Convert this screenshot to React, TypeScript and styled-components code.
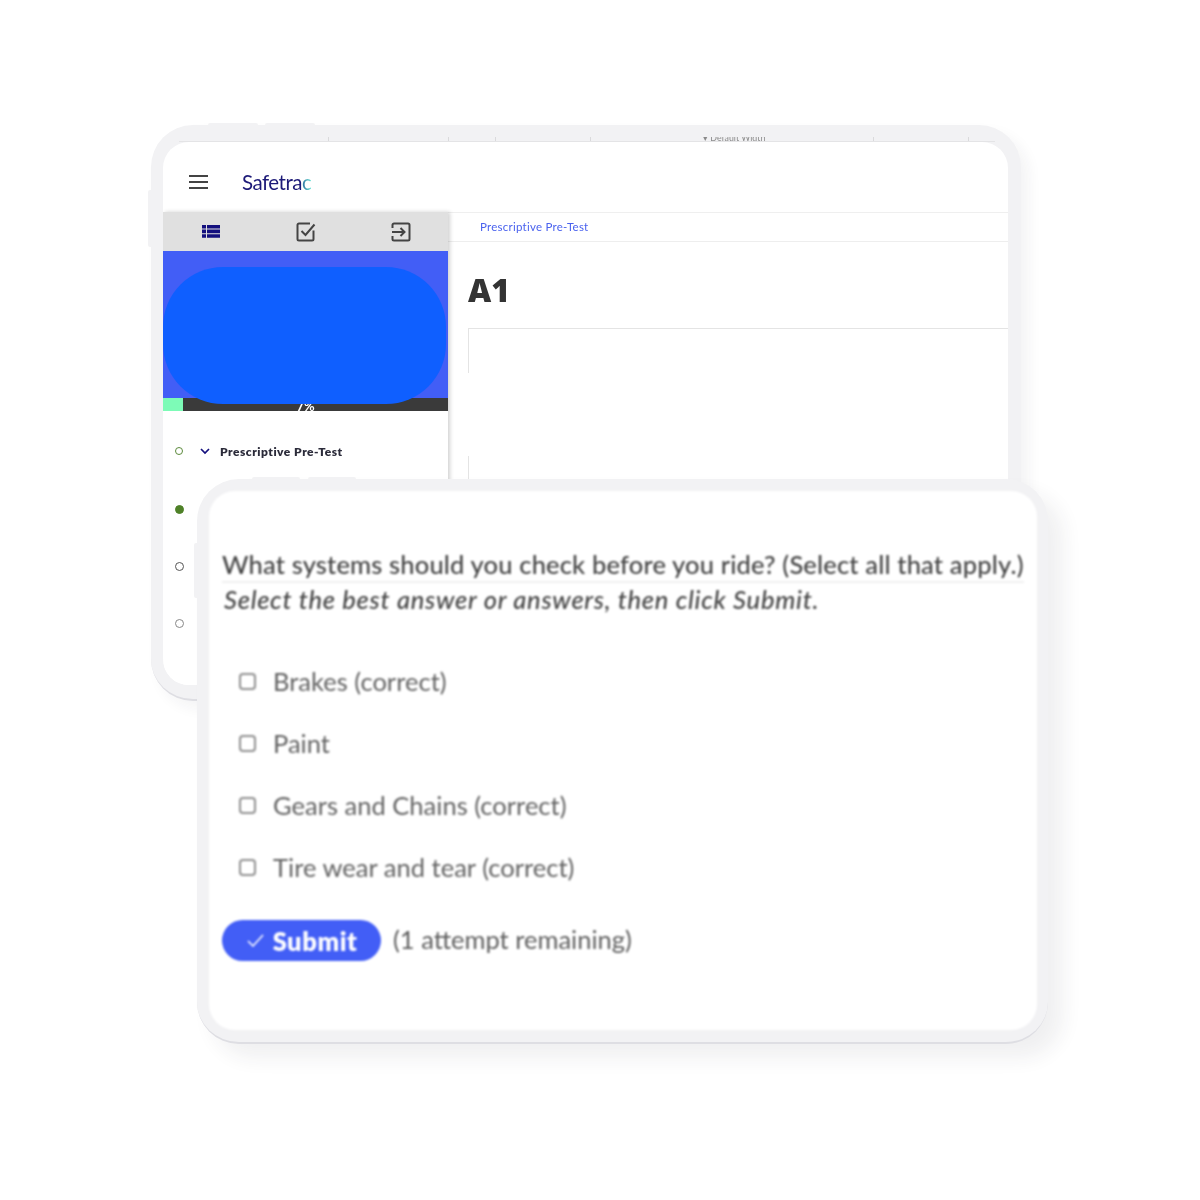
import React from "react";
import styled, { createGlobalStyle } from "styled-components";

const Global = createGlobalStyle`
  html, body { margin: 0; padding: 0; background: #fff; }
  body { font-family: "Lato", "Open Sans", sans-serif; }
`;

const Canvas = styled.div`
  position: relative;
  width: 1200px;
  height: 1200px;
  overflow: hidden;
  background: #fff;
`;

const Device = styled.div<{ $front?: boolean }>`
  position: absolute;
  box-sizing: border-box;
  background: #f2f2f4;
  left: ${(p) => (p.$front ? "197px" : "151px")};
  top: ${(p) => (p.$front ? "479px" : "125px")};
  width: ${(p) => (p.$front ? "851px" : "870px")};
  height: ${(p) => (p.$front ? "565px" : "576px")};
  border-radius: 42px;
  padding: ${(p) => (p.$front ? "12px 11px 12px 12px" : "17px 13px 14px 12px")};
  border-bottom: 2px solid #dedee3;
  box-shadow: ${(p) =>
    p.$front ? "15px 14px 20px rgba(40, 40, 60, 0.07)" : "8px 8px 14px rgba(40, 40, 60, 0.05)"};
`;

const SideKey = styled.span<{ $x: number; $w: number }>`
  position: absolute;
  top: -2px;
  left: ${(p) => p.$x}px;
  width: ${(p) => p.$w}px;
  height: 2px;
  background: #f2f2f4;
  border-radius: 2px 2px 0 0;
`;

const VolumeKey = styled.span<{ $top: number; $h: number }>`
  position: absolute;
  left: -3px;
  top: ${(p) => p.$top}px;
  width: 3px;
  height: ${(p) => p.$h}px;
  background: #f2f2f4;
  border-radius: 2px 0 0 2px;
`;

const Ruler = styled.div`
  position: absolute;
  top: 12px;
  left: 28px;
  right: 26px;
  height: 5px;
  box-sizing: border-box;
  overflow: hidden;
  border-bottom: 1px solid #e4e4e6;
`;

const Tick = styled.span<{ $x: number }>`
  position: absolute;
  left: ${(p) => p.$x}px;
  top: 0;
  width: 1px;
  height: 4px;
  background: #dadadc;
`;

const RulerLabel = styled.span`
  position: absolute;
  left: 524px;
  top: -4px;
  font-size: 8.800px;
  line-height: 10px;
  color: #8a8a8a;
  white-space: nowrap;
  filter: blur(0.4px);
`;

const Screen = styled.div<{ $front?: boolean }>`
  position: relative;
  height: 100%;
  background: #fff;
  overflow: hidden;
  border-radius: 26px;
  filter: blur(${(p) => (p.$front ? "0.85px" : "0.6px")});
`;

const TopBar = styled.header`
  height: 70px;
  display: flex;
  align-items: center;
  padding: 10px 0 0 26px;
  gap: 34px;
  box-sizing: border-box;
`;

const Logo = styled.span`
  font-size: 20.500px;
  font-weight: 400;
  letter-spacing: -0.5px;
  color: #1d1a78;
`;

const LogoEnd = styled.span`
  background: linear-gradient(90deg, #2c6f9f, #6fe3d6);
  -webkit-background-clip: text;
  background-clip: text;
  color: transparent;
`;

const Body = styled.div`
  display: flex;
  height: 500px;
`;

const Sidebar = styled.aside`
  flex: 0 0 285px;
  box-shadow: 2px 0 4px rgba(0, 0, 0, 0.18);
  background: #fff;
  position: relative;
  z-index: 1;
`;

const Tabs = styled.div`
  height: 39px;
  background: #e0e0e0;
  display: grid;
  grid-template-columns: 95px 95px 95px;
  justify-items: center;
  align-items: center;
`;

const Hero = styled.div`
  height: 147px;
  background: #425ef6;
  box-sizing: border-box;
  position: relative;
`;

const Blob = styled.div`
  position: absolute;
  top: 16px;
  left: 0;
  width: 283px;
  height: 137px;
  background: #0f5fff;
  border-radius: 60px;
  z-index: 2;
`;

const Progress = styled.div`
  height: 13px;
  background: #3a3a3a;
  position: relative;
  overflow: hidden;
  text-align: center;
  color: #fff;
  font-size: 13px;
  font-weight: 700;
  line-height: 13px;
`;

const ProgressFill = styled.div`
  position: absolute;
  left: 0;
  top: 0;
  bottom: 0;
  background: #7dfbb7;
`;

const ProgressText = styled.span`
  position: relative;
  top: 2px;
`;

const Steps = styled.ul`
  list-style: none;
  margin: 10px 0 0;
  padding: 0;
`;

const Step = styled.li<{ $h: number }>`
  height: ${(p) => p.$h}px;
  display: flex;
  align-items: center;
  padding-left: 12px;
  box-sizing: border-box;
`;

const Dot = styled.span<{ $color: string; $filled?: boolean; $size?: number }>`
  flex: none;
  box-sizing: border-box;
  width: ${(p) => p.$size ?? 9}px;
  height: ${(p) => p.$size ?? 9}px;
  border-radius: 50%;
  border: 1.500px solid ${(p) => p.$color};
  background: ${(p) => (p.$filled ? p.$color : "transparent")};
`;

const StepLabel = styled.span`
  margin-left: 17px;
  display: inline-flex;
  align-items: center;
  gap: 10px;
  font-size: 12px;
  font-weight: 800;
  letter-spacing: 0.5px;
  color: #2b2b3a;
`;

const Main = styled.main`
  flex: 1;
  min-width: 0;
  border-top: 1px solid #efefef;
`;

const Breadcrumb = styled.div`
  height: 29px;
  box-sizing: border-box;
  border-bottom: 1px solid #eeeeee;
  padding: 0 0 2px 32px;
  display: flex;
  align-items: center;
  font-size: 11.500px;
  letter-spacing: 0.25px;
  color: #4a62ee;
`;

const Title = styled.h1`
  margin: 0;
  padding: 30px 0 0 20px;
  font-family: "Open Sans", sans-serif;
  font-size: 32px;
  line-height: 36px;
  font-weight: 800;
  color: #333;
`;

const ContentBox = styled.div`
  margin: 20px 0 0 20px;
  height: 150px;
  border-top: 1px solid #e4e4e4;
  border-left: 1px solid #e4e4e4;
  position: relative;
`;

const BoxGap = styled.span`
  position: absolute;
  left: -1px;
  top: 44px;
  width: 1px;
  height: 83px;
  background: #fff;
`;

const Quiz = styled.section`
  padding: 57px 13px 0 13px;
  color: #555;
`;

const Question = styled.div`
  font-size: 25.500px;
  line-height: 32px;
  font-weight: 500;
  color: #444;
  letter-spacing: 0.16px;
  white-space: nowrap;
  border-bottom: 2px solid #f0f0f0;
  padding-bottom: 1px;
`;

const Hint = styled.div`
  font-size: 25.500px;
  line-height: 32px;
  font-style: italic;
  font-weight: 500;
  color: #444;
  letter-spacing: 0.72px;
  white-space: nowrap;
  padding-left: 2px;
`;

const Options = styled.ul`
  list-style: none;
  margin: 35px 0 0;
  padding: 0 0 0 17px;
`;

const Option = styled.li`
  height: 62px;
  display: flex;
  align-items: center;
  gap: 17px;
  font-size: 25.500px;
  color: #626262;
  letter-spacing: 0.02px;
`;

const Box = styled.span`
  flex: none;
  box-sizing: border-box;
  width: 17px;
  height: 17px;
  border: 2px solid #8f8f8f;
  border-radius: 4px;
`;

const Actions = styled.div`
  display: flex;
  align-items: center;
  gap: 12px;
  margin-top: 22px;
`;

const SubmitButton = styled.button`
  width: 159px;
  height: 41px;
  border: none;
  border-radius: 21px;
  background: #425ef6;
  color: #fff;
  font: 800 25.500px "Lato", sans-serif;
  letter-spacing: 0.55px;
  display: flex;
  align-items: center;
  justify-content: center;
  gap: 9px;
  padding: 0 0 0 1px;
`;

const Attempts = styled.span`
  font-size: 25.500px;
  color: #5e5e5e;
  position: relative;
  top: -2px;
`;

const Hamburger = () => (
  <svg width="19" height="14" viewBox="0 0 19 14" fill="none" stroke="#444" strokeWidth="2">
    <path d="M0 1h19M0 7h19M0 13h19" />
  </svg>
);

const ListIcon = () => (
  <svg width="18" height="15" viewBox="0 0 18 15" fill="#14107e">
    <path d="M0 1h4v3.600H0zM5 1h13v3.600H5zM0 5.600h4v3.600H0zM5 5.600h13v3.600H5zM0 10.200h4v3.600H0zM5 10.200h13v3.600H5z" />
  </svg>
);

const CheckIcon = () => (
  <svg width="20" height="20" viewBox="0 0 20 20" fill="none" stroke="#444" strokeWidth="2">
    <path d="M17.500 8.500V17a1.500 1.500 0 0 1-1.500 1.500H3A1.500 1.500 0 0 1 1.500 17V3A1.500 1.500 0 0 1 3 1.500h11" />
    <path d="M5.500 9l4 4L18.500 2.500" />
  </svg>
);

const ExitIcon = () => (
  <svg width="20" height="20" viewBox="0 0 20 20" fill="none" stroke="#444" strokeWidth="2">
    <path d="M1.500 6V3A1.500 1.500 0 0 1 3 1.500h14A1.500 1.500 0 0 1 18.500 3v14a1.500 1.500 0 0 1-1.500 1.500H3A1.500 1.500 0 0 1 1.500 17v-3" />
    <path d="M1 10h12M9.500 6l4 4-4 4" />
  </svg>
);

const Chevron = () => (
  <svg width="10" height="7" viewBox="0 0 10 7" fill="none" stroke="#14107e" strokeWidth="1.700">
    <path d="M1 1l4 4 4-4" />
  </svg>
);

const Tickmark = () => (
  <svg width="17" height="13" viewBox="0 0 17 13" fill="none" stroke="#fff" strokeWidth="1.500">
    <path d="M1 7l5 5L16 1" />
  </svg>
);

const ticks = [177, 297, 344, 439, 722, 817];
const options = ["Brakes (correct)", "Paint", "Gears and Chains (correct)", "Tire wear and tear (correct)"];

export default function App() {
  return (
    <Canvas>
      <Global />
      <Device>
        <SideKey $x={57} $w={50} />
        <SideKey $x={114} $w={50} />
        <VolumeKey $top={65} $h={57} />
        <Ruler>
          {ticks.map((x) => (
            <Tick key={x} $x={x - 28} />
          ))}
          <RulerLabel>▾ Default Width</RulerLabel>
        </Ruler>
        <Screen>
          <TopBar>
            <Hamburger />
            <Logo>
              Safetra<LogoEnd>c</LogoEnd>
            </Logo>
          </TopBar>
          <Body>
            <Sidebar>
              <Tabs>
                <ListIcon />
                <CheckIcon />
                <ExitIcon />
              </Tabs>
              <Hero>
                <Blob />
              </Hero>
              <Progress>
                <ProgressFill style={{ width: "7%" }} />
                <ProgressText>7%</ProgressText>
              </Progress>
              <Steps>
                <Step $h={60}>
                  <Dot $color="#5c8a3c" $size={8} />
                  <StepLabel>
                    <Chevron />
                    Prescriptive Pre-Test
                  </StepLabel>
                </Step>
                <Step $h={57}>
                  <Dot $color="#4f8128" $filled />
                </Step>
                <Step $h={57}>
                  <Dot $color="#555" />
                </Step>
                <Step $h={56}>
                  <Dot $color="#888" />
                </Step>
              </Steps>
            </Sidebar>
            <Main>
              <Breadcrumb>Prescriptive Pre-Test</Breadcrumb>
              <Title>A1</Title>
              <ContentBox>
                <BoxGap />
              </ContentBox>
            </Main>
          </Body>
        </Screen>
      </Device>
      <Device $front>
        <SideKey $x={55} $w={48} />
        <SideKey $x={111} $w={48} />
        <VolumeKey $top={64} $h={55} />
        <Screen $front>
          <Quiz>
            <Question>What systems should you check before you ride? (Select all that apply.)</Question>
            <Hint>Select the best answer or answers, then click Submit.</Hint>
            <Options>
              {options.map((o) => (
                <Option key={o}>
                  <Box />
                  {o}
                </Option>
              ))}
            </Options>
            <Actions>
              <SubmitButton>
                <Tickmark />
                Submit
              </SubmitButton>
              <Attempts>(1 attempt remaining)</Attempts>
            </Actions>
          </Quiz>
        </Screen>
      </Device>
    </Canvas>
  );
}
